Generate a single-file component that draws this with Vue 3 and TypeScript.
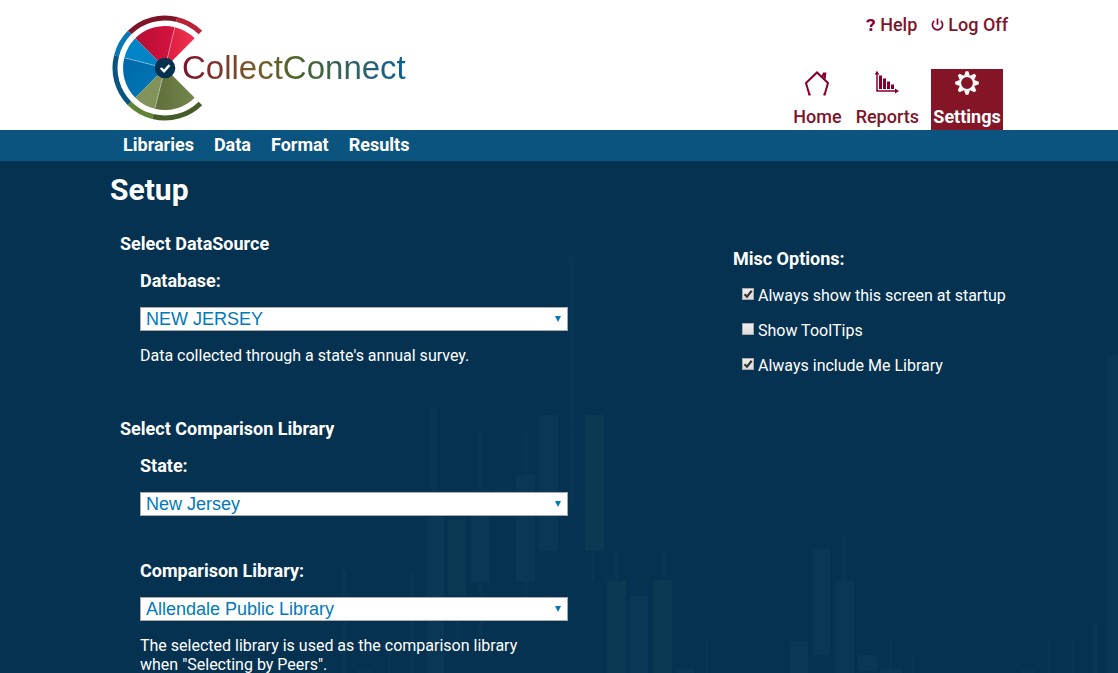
<script setup lang="ts">
import { reactive } from 'vue'

interface Tab {
  label: string
  icon: 'home' | 'reports' | 'settings'
  active?: boolean
}

const sections: string[] = ['Libraries', 'Data', 'Format', 'Results']

const tabs: Tab[] = [
  { label: 'Home', icon: 'home' },
  { label: 'Reports', icon: 'reports' },
  { label: 'Settings', icon: 'settings', active: true },
]

const options = reactive([
  { id: 'startup', label: 'Always show this screen at startup', checked: true },
  { id: 'tooltips', label: 'Show ToolTips', checked: false },
  { id: 'me-library', label: 'Always include Me Library', checked: true },
])

const form = reactive({
  database: 'NEW JERSEY',
  state: 'New Jersey',
  library: 'Allendale Public Library',
})

// Candlestick backdrop: x, y, width, height, tone
type Candle = [number, number, number, number, 'blue' | 'green' | 'faint']
const candles: Candle[] = [
  [570, 94, 4, 250, 'faint'],
  [568, 94, 7, 8, 'faint'],
  [566, 268, 16, 2, 'faint'],
  [585, 254, 19, 136, 'green'],
  [592, 390, 3, 31, 'faint'],
  [539, 254, 19, 136, 'blue'],
  [516, 314, 19, 107, 'blue'],
  [524, 270, 4, 44, 'faint'],
  [524, 421, 4, 15, 'faint'],
  [471, 329, 18, 92, 'blue'],
  [479, 270, 4, 59, 'faint'],
  [479, 422, 4, 57, 'faint'],
  [494, 328, 18, 4, 'faint'],
  [448, 358, 18, 76, 'green'],
  [456, 434, 4, 45, 'faint'],
  [427, 356, 17, 156, 'blue'],
  [431, 246, 6, 110, 'faint'],
  [342, 409, 5, 103, 'faint'],
  [410, 411, 4, 101, 'faint'],
  [388, 479, 3, 33, 'faint'],
  [358, 508, 16, 4, 'faint'],
  [607, 420, 19, 92, 'green'],
  [615, 390, 3, 30, 'faint'],
  [630, 435, 18, 77, 'blue'],
  [653, 419, 19, 93, 'green'],
  [662, 390, 3, 29, 'faint'],
  [677, 508, 17, 4, 'blue'],
  [706, 477, 2, 35, 'faint'],
  [790, 480, 18, 32, 'blue'],
  [813, 388, 17, 106, 'blue'],
  [835, 420, 19, 92, 'blue'],
  [841, 374, 5, 46, 'faint'],
  [858, 494, 19, 16, 'blue'],
  [880, 508, 22, 4, 'blue'],
  [889, 477, 3, 31, 'faint'],
  [912, 494, 2, 18, 'faint'],
  [1022, 508, 12, 4, 'faint'],
  [1048, 477, 2, 35, 'faint'],
  [1072, 477, 3, 35, 'faint'],
  [1093, 464, 4, 48, 'blue'],
  [1107, 194, 11, 318, 'blue'],
]
</script>

<template>
  <div class="page">
    <header class="header">
      <div class="container header-row">
        <a href="#" class="brand">
          <svg class="brand-mark" viewBox="-53 -53 106 106" aria-hidden="true">
            <defs>
              <linearGradient id="redWedge" x1="0" y1="0" x2="1" y2="0">
                <stop offset="0" stop-color="#b50d35" />
                <stop offset="1" stop-color="#d81340" />
              </linearGradient>
              <linearGradient id="pinkWedge" x1="0" y1="0" x2="1" y2="0">
                <stop offset="0" stop-color="#d91c40" />
                <stop offset="1" stop-color="#f23350" />
              </linearGradient>
              <linearGradient id="blueWedge" x1="0" y1="0" x2="1" y2="1">
                <stop offset="0" stop-color="#0069a8" />
                <stop offset="1" stop-color="#0079b8" />
              </linearGradient>
              <linearGradient id="oliveWedge" x1="0" y1="0" x2="1" y2="0">
                <stop offset="0" stop-color="#5f6e3a" />
                <stop offset="1" stop-color="#75864e" />
              </linearGradient>
            </defs>
            <g fill="none" stroke-width="5">
              <path stroke="#7e1328" d="M-35.4-35.4A50 50 0 0 1 11.7-48.6" />
              <path stroke="#b92237" d="M11.7-48.6A50 50 0 0 1 35.4-35.4" />
              <path stroke="#0777b5" d="M-48.5-12.1A50 50 0 0 1-35.4-35.4" />
              <path stroke="#0b5480" d="M-35.4 35.4A50 50 0 0 1-48.5-12.1" />
              <path stroke="#5f8534" d="M-12.1 48.5A50 50 0 0 1-35.4 35.4" />
              <path stroke="#455b28" d="M35.4 35.4A50 50 0 0 1-12.1 48.5" />
            </g>
            <path fill="url(#redWedge)" d="M0 0L-29.7-29.7A42 42 0 0 1 9.8-40.8Z" />
            <path fill="url(#pinkWedge)" d="M0 0L9.8-40.8A42 42 0 0 1 29.7-29.7Z" />
            <path fill="#0384c6" d="M0 0L-40.7-10.2A42 42 0 0 1-29.7-29.7Z" />
            <path fill="url(#blueWedge)" d="M0 0L-29.7 29.7A42 42 0 0 1-40.7-10.2Z" />
            <path fill="#81935a" d="M0 0L-10.2 40.7A42 42 0 0 1-29.7 29.7Z" />
            <path fill="url(#oliveWedge)" d="M0 0L29.7 29.7A42 42 0 0 1-10.2 40.7Z" />
            <path
              stroke="#fff"
              stroke-opacity=".35"
              fill="none"
              d="M0 0L9.8-40.8M0 0L-40.7-10.2M0 0L-10.2 40.7"
            />
            <circle r="10.3" fill="#05314f" />
            <path d="M-4.3 0L-1 3.2L4.5-2.9" fill="none" stroke="#fff" stroke-width="2.4" />
          </svg>
          <span class="brand-name">CollectConnect</span>
        </a>

        <div class="header-nav">
          <nav class="account" aria-label="Account">
            <a href="#" class="account-link">
              <svg width="10" height="14" viewBox="0 0 10 14" aria-hidden="true">
                <path
                  d="M1.4 4.4C1.700 2.600 3 2.100 4.700 2.100C6.700 2.100 7.800 3 7.800 4.300C7.800 6.200 4.900 6.200 4.900 8.900"
                  fill="none"
                  stroke="currentColor"
                  stroke-width="2.400"
                />
                <path d="M3.500 10.200H6.300V12.900H3.500Z" fill="currentColor" />
              </svg>
              Help
            </a>
            <a href="#" class="account-link">
              <svg width="13" height="14" viewBox="0 0 13 14" aria-hidden="true">
                <path
                  d="M3.200 2.800A5.100 5.100 0 1 0 9.800 2.800M6.500 .5V6.800"
                  fill="none"
                  stroke="currentColor"
                  stroke-width="1.700"
                />
              </svg>
              Log Off
            </a>
          </nav>
          <nav class="tabs" aria-label="Main">
            <a
              v-for="tab in tabs"
              :key="tab.label"
              href="#"
              class="tab"
              :class="{ active: tab.active }"
            >
              <svg
                v-if="tab.icon === 'home'"
                width="26"
                height="28"
                viewBox="0 0 26 28"
                fill="none"
                stroke="currentColor"
                stroke-width="2"
                aria-hidden="true"
              >
                <path d="M5.500 26L2 14L13 3.500L24 14L20.500 26" />
                <path d="M4.500 25.500H6.500M19.500 25.500H21.500" />
                <path d="M18.300 8L19.800 4.600H21.300L20.500 10.500" />
              </svg>
              <svg
                v-else-if="tab.icon === 'reports'"
                width="26"
                height="28"
                viewBox="0 0 26 28"
                fill="currentColor"
                aria-hidden="true"
              >
                <path
                  d="M3 4V22H22"
                  fill="none"
                  stroke="currentColor"
                  stroke-width="1.500"
                />
                <path d="M.6 5.500L3 1.800L5.400 5.500ZM21 19.600L25 22L21 24.400Z" />
                <path d="M5 6.500H8V20H5ZM9 9.500H12V20H9ZM13 12.500H16V20H13ZM17 15.500H20V20H17Z" />
              </svg>
              <svg
                v-else
                width="26"
                height="28"
                viewBox="-13 -14 26 28"
                fill="none"
                stroke="currentColor"
                aria-hidden="true"
              >
                <circle r="7" stroke-width="2.200" />
                <g fill="currentColor" stroke="none">
                  <path
                    v-for="angle in [0, 45, 90, 135, 180, 225, 270, 315]"
                    :key="angle"
                    d="M-2.900-7.500L-1.300-11.800H1.300L2.900-7.500Z"
                    :transform="`rotate(${angle})`"
                  />
                </g>
              </svg>
              <span>{{ tab.label }}</span>
            </a>
          </nav>
        </div>
      </div>
    </header>

    <nav class="sections" aria-label="Sections">
      <div class="container section-row">
        <a v-for="section in sections" :key="section" href="#">{{ section }}</a>
      </div>
    </nav>

    <main class="main">
      <svg
        class="backdrop"
        viewBox="0 0 1118 512"
        preserveAspectRatio="xMidYMin slice"
        aria-hidden="true"
      >
        <rect
          v-for="(candle, index) in candles"
          :key="index"
          :x="candle[0]"
          :y="candle[1]"
          :width="candle[2]"
          :height="candle[3]"
          :class="candle[4]"
        />
      </svg>

      <div class="container content">
        <h1>Setup</h1>
        <div class="columns">
          <div class="setup">
            <section class="group">
              <h2>Select DataSource</h2>
              <div class="field">
                <label for="database">Database:</label>
                <div class="select">
                  <select id="database" v-model="form.database">
                    <option>NEW JERSEY</option>
                  </select>
                  <svg width="6" height="6" viewBox="0 0 6 6" aria-hidden="true">
                    <path d="M0 0H6L3 6Z" fill="currentColor" />
                  </svg>
                </div>
                <p>Data collected through a state's annual survey.</p>
              </div>
            </section>

            <section class="group">
              <h2>Select Comparison Library</h2>
              <div class="field">
                <label for="state">State:</label>
                <div class="select">
                  <select id="state" v-model="form.state">
                    <option>New Jersey</option>
                  </select>
                  <svg width="6" height="6" viewBox="0 0 6 6" aria-hidden="true">
                    <path d="M0 0H6L3 6Z" fill="currentColor" />
                  </svg>
                </div>
              </div>
              <div class="field spaced">
                <label for="library">Comparison Library:</label>
                <div class="select">
                  <select id="library" v-model="form.library">
                    <option>Allendale Public Library</option>
                  </select>
                  <svg width="6" height="6" viewBox="0 0 6 6" aria-hidden="true">
                    <path d="M0 0H6L3 6Z" fill="currentColor" />
                  </svg>
                </div>
                <p>The selected library is used as the comparison library when "Selecting by Peers".</p>
              </div>
            </section>
          </div>

          <section class="misc">
            <h2>Misc Options:</h2>
            <label v-for="option in options" :key="option.id" class="option" :for="option.id">
              <input :id="option.id" v-model="option.checked" type="checkbox" />
              <svg
                v-if="option.checked"
                width="12"
                height="12"
                viewBox="0 0 12 12"
                aria-hidden="true"
              >
                <path d="M2.500 6.200L5 8.700L9.700 2.800" fill="none" stroke="#333" stroke-width="2.200" />
              </svg>
              <span>{{ option.label }}</span>
            </label>
          </section>
        </div>
      </div>
    </main>
  </div>
</template>

<style>
body {
  margin: 0;
  background: #053250;
}
</style>

<style scoped>
.page {
  display: flex;
  flex-direction: column;
  min-height: 100vh;
  font-family: Roboto, "Liberation Sans", sans-serif;
  font-size: 16px;
  color: #fff;
}

a {
  color: inherit;
  text-decoration: none;
}

.container {
  box-sizing: border-box;
  width: 100%;
  max-width: 898px;
  margin: 0 auto;
}

.header {
  background: #fff;
  color: #7f1428;
}

.header-row {
  display: flex;
  justify-content: space-between;
  min-height: 130px;
}

.brand {
  display: flex;
  align-items: center;
  align-self: flex-start;
  margin: 15px 0 0 2px;
}

.brand-mark {
  width: 106px;
  height: 106px;
}

.brand-name {
  margin-left: -36px;
  font-family: "Liberation Sans", Arial, sans-serif;
  font-size: 33px;
  line-height: 44px;
  color: transparent;
  background: linear-gradient(90deg, #7e1328, #7a5a2a 33%, #4a6528 52%, #2f6268 78%, #075f96);
  -webkit-background-clip: text;
  background-clip: text;
}

.header-nav {
  display: flex;
  flex-direction: column;
  justify-content: space-between;
  align-items: flex-end;
}

.account {
  display: flex;
  gap: 14px;
  padding-top: 13px;
}

.account-link {
  display: flex;
  align-items: center;
  gap: 4px;
  font-size: 18px;
  font-weight: 500;
  line-height: 24px;
}

.account-link svg,
.tab:not(.active) svg {
  color: #85002b;
}

.tabs {
  display: flex;
  gap: 10px;
  margin-right: 5px;
}

.tab {
  display: flex;
  flex-direction: column;
  align-items: center;
  justify-content: space-between;
  height: 61px;
  padding: 0 2px;
  font-size: 18px;
  font-weight: 500;
  line-height: 26px;
}

.tab.active {
  min-width: 68px;
  background: #831527;
  color: #fff;
  font-weight: 700;
}

.sections {
  background: #0b5480;
}

.section-row {
  display: flex;
  gap: 20px;
  padding: 2px 13px 3px;
  font-size: 18px;
  font-weight: 700;
  line-height: 26px;
}

.main {
  position: relative;
  flex: 1;
  overflow: hidden;
  background: #053250;
}

.backdrop {
  position: absolute;
  top: 0;
  left: 0;
  width: 100%;
  height: 512px;
}

.blue {
  fill: #0a3755;
}

.green {
  fill: #0c3952;
}

.faint {
  fill: #083553;
}

.content {
  position: relative;
  padding-top: 11px;
}

h1 {
  margin: 0;
  font-size: 30px;
  font-weight: 700;
  line-height: 36px;
}

h2 {
  margin: 0;
  font-size: 18px;
  font-weight: 700;
  line-height: 24px;
}

.columns {
  display: flex;
  justify-content: space-between;
  padding: 24px 0 0 10px;
}

.setup {
  flex: 0 1 448px;
}

.group + .group {
  margin-top: 52px;
}

.field {
  padding: 13px 0 0 20px;
}

.field.spaced {
  padding-top: 43px;
}

.field label {
  display: block;
  margin-bottom: 14px;
  font-size: 18px;
  font-weight: 700;
  line-height: 24px;
}

.field p {
  max-width: 400px;
  margin: 15px 0 0;
  line-height: 19px;
}

.select {
  position: relative;
  color: #0079bd;
}

.select select {
  display: block;
  appearance: none;
  width: 100%;
  height: 24px;
  padding: 0 24px 0 5px;
  border: 1px solid #a9a9a9;
  border-radius: 0;
  background: #fff;
  color: inherit;
  font-family: "Liberation Sans", sans-serif;
  font-size: 18px;
}

.select svg {
  position: absolute;
  top: 9px;
  right: 7px;
  pointer-events: none;
}

.misc {
  flex: 0 0 275px;
  padding-top: 15px;
}

.option {
  position: relative;
  display: flex;
  align-items: flex-start;
  gap: 4px;
  margin-top: 11px;
  padding-left: 9px;
  line-height: 24px;
}

.misc h2 + .option {
  margin-top: 13px;
}

.option input {
  appearance: none;
  width: 12px;
  height: 12px;
  margin: 4px 0 0;
  border: 1px solid #a9a9a9;
  background: linear-gradient(#eee, #dcdcdc);
}

.option svg {
  position: absolute;
  top: 4px;
  left: 9px;
  pointer-events: none;
}
</style>
